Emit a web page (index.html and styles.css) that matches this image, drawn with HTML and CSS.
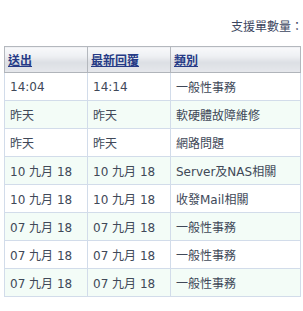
FILE: index.html
```html
<!DOCTYPE html>
<html lang="zh-Hant">
<head>
<meta charset="utf-8">
<link rel="stylesheet" href="styles.css">
</head>
<body>
<div class="summary">支援單數量：</div>
<table class="tickets">
  <colgroup>
    <col class="c-sent">
    <col class="c-reply">
    <col class="c-type">
  </colgroup>
  <thead>
    <tr>
      <th><a href="#">送出</a></th>
      <th><a href="#">最新回覆</a></th>
      <th><a href="#">類別</a></th>
    </tr>
  </thead>
  <tbody>
    <tr><td>14:04</td><td>14:14</td><td>一般性事務</td></tr>
    <tr class="alt"><td>昨天</td><td>昨天</td><td>軟硬體故障維修</td></tr>
    <tr><td>昨天</td><td>昨天</td><td>網路問題</td></tr>
    <tr class="alt"><td>10 九月 18</td><td>10 九月 18</td><td>Server及NAS相關</td></tr>
    <tr><td>10 九月 18</td><td>10 九月 18</td><td>收發Mail相關</td></tr>
    <tr class="alt"><td>07 九月 18</td><td>07 九月 18</td><td>一般性事務</td></tr>
    <tr><td>07 九月 18</td><td>07 九月 18</td><td>一般性事務</td></tr>
    <tr class="alt"><td>07 九月 18</td><td>07 九月 18</td><td>一般性事務</td></tr>
  </tbody>
</table>
</body>
</html>
```

FILE: styles.css
```css
html, body {
  margin: 0;
  padding: 0;
  background: #ffffff;
  overflow: hidden;
}
body {
  width: 303px;
  font-family: "DejaVu Sans", "Noto Sans CJK TC", sans-serif;
  font-size: 12px;
  color: #404858;
}
.summary {
  height: 46px;
  box-sizing: border-box;
  padding-top: 19px;
  line-height: 16px;
  text-align: right;
  white-space: nowrap;
  color: #3c4660;
  font-size: 12px;
}
.tickets {
  margin-left: 4px;
  width: 297px;
  border-collapse: collapse;
  table-layout: fixed;
}
.c-sent, .c-reply { width: 83px; }
.tickets th {
  height: 25px;
  padding: 0 0 0 3px;
  text-align: left;
  font-weight: bold;
  border: 1px solid #b4b8be;
  background: linear-gradient(#f8f9fb 0%, #eef0f3 35%, #dcdfe4 60%, #e6e8ec 100%);
}
.tickets th a {
  color: #253a86;
  text-decoration: underline;
}
.tickets td {
  height: 27px;
  padding: 0 0 0 5px;
  border: 1px solid #d2dcea;
  white-space: nowrap;
  overflow: hidden;
}
.tickets thead tr th { border-bottom-color: #b0b4ba; }
.tickets tr.alt td { background: #f3fcf7; }
```
